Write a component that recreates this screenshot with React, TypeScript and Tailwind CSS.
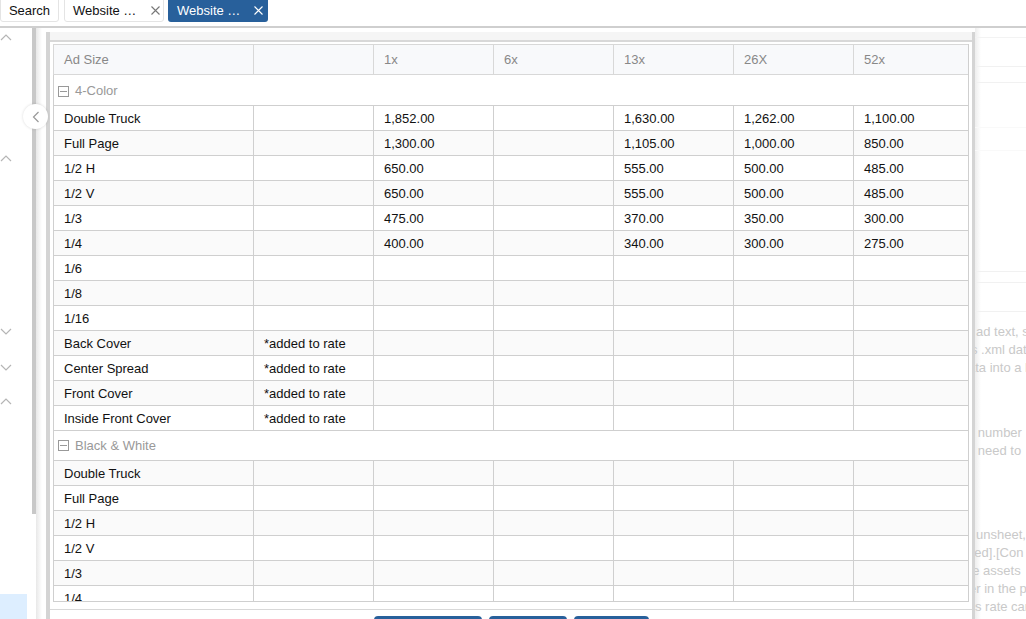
import React from "react";

const cols = [200, 120, 120, 120, 120, 120, 116];
const heads = ["Ad Size", "", "1x", "6x", "13x", "26X", "52x"];
type R = string[];
const color: R[] = [
  ["Double Truck", "", "1,852.00", "", "1,630.00", "1,262.00", "1,100.00"],
  ["Full Page", "", "1,300.00", "", "1,105.00", "1,000.00", "850.00"],
  ["1/2 H", "", "650.00", "", "555.00", "500.00", "485.00"],
  ["1/2 V", "", "650.00", "", "555.00", "500.00", "485.00"],
  ["1/3", "", "475.00", "", "370.00", "350.00", "300.00"],
  ["1/4", "", "400.00", "", "340.00", "300.00", "275.00"],
  ["1/6", "", "", "", "", "", ""],
  ["1/8", "", "", "", "", "", ""],
  ["1/16", "", "", "", "", "", ""],
  ["Back Cover", "*added to rate", "", "", "", "", ""],
  ["Center Spread", "*added to rate", "", "", "", "", ""],
  ["Front Cover", "*added to rate", "", "", "", "", ""],
  ["Inside Front Cover", "*added to rate", "", "", "", "", ""],
];
const bw: R[] = ["Double Truck", "Full Page", "1/2 H", "1/2 V", "1/3", "1/4"].map((n) => [n, "", "", "", "", "", ""]);

function Chevron({ up }: { up?: boolean }) {
  return (
    <svg width="12" height="7" viewBox="0 0 12 7" fill="none" stroke="#b5b5b5" strokeWidth="1.2">
      <path d={up ? "M1 6 L6 1 L11 6" : "M1 1 L6 6 L11 1"} />
    </svg>
  );
}

function X({ color }: { color: string }) {
  return (
    <svg width="9" height="9" viewBox="0 0 9 9" fill="none" stroke={color} strokeWidth="1.1">
      <path d="M0.5 0.5 L8.5 8.5 M8.5 0.5 L0.5 8.5" />
    </svg>
  );
}

function Rows({ rows, odd, shift }: { rows: R[]; odd: boolean; shift?: boolean }) {
  return (
    <>
      {rows.map((r, i) => (
        <tr key={i} className={`h-[25px] ${(i % 2 === 1) === odd ? "bg-[#fafafa]" : "bg-white"}`}>
          {r.map((c, j) => (
            <td key={j} className={`border border-[#cfcfcf] p-0 pl-[10px] text-[13px] text-[#111] whitespace-nowrap ${shift ? "pt-[2px] leading-[22px]" : "pt-[2px] leading-[22px]"}`}>
              {c}
            </td>
          ))}
        </tr>
      ))}
    </>
  );
}

function Group({ label, tall }: { label: string; tall?: boolean }) {
  return (
    <tr className={`${tall ? "h-[31px]" : "h-[30px]"} bg-white`}>
      <td colSpan={7} className={`border border-[#cfcfcf] p-0 ${tall ? "pt-[2px]" : ""}`}>
        <div className="flex items-center gap-[6px] pl-[4px] text-[13px] text-[#999]">
          <span className="w-[11px] h-[11px] border border-[#999] flex items-center justify-center">
            <span className="w-[7px] h-px bg-[#999]" />
          </span>
          {label}
        </div>
      </td>
    </tr>
  );
}

function Bg({ t, cls }: { t: string; cls: string }) {
  return <div className={`whitespace-nowrap text-[13px] leading-[18px] text-[#c9c9c9] ${cls}`}>{t}</div>;
}

export default function App() {
  return (
    <div className="w-[1026px] h-[619px] overflow-hidden bg-white font-['Liberation_Sans',Arial,sans-serif] flex flex-col">
      <div className="h-[28px] shrink-0 border-b-2 border-[#cfcfcf]">
        <div className="flex items-start h-[23px] -mt-[1px] text-[13px]">
          <div className="w-[59px] h-[23px] bg-white border border-[#e4e4e4] rounded-b-[3px] flex items-center justify-center text-[#111]">Search</div>
          <div className="w-[100px] h-[23px] ml-[5px] bg-white border border-[#e4e4e4] rounded-b-[3px] flex items-center pl-[8px] text-[#111]">
            <span>Website …</span>
            <span className="ml-auto mr-[3px] flex"><X color="#777" /></span>
          </div>
          <div className="w-[100px] h-[23px] ml-[4px] bg-[#28609b] rounded-b-[3px] flex items-center pl-[9px] text-white">
            <span>Website …</span>
            <span className="ml-auto mr-[5px] flex"><X color="#fff" /></span>
          </div>
        </div>
      </div>

      <div className="flex flex-1 min-h-0">
        <aside className="w-[32px] shrink-0 flex flex-col">
          <div className="pt-[6px] flex"><Chevron up /></div>
          <div className="mt-[114px] flex"><Chevron up /></div>
          <div className="mt-[166px] flex"><Chevron /></div>
          <div className="mt-[29px] flex"><Chevron /></div>
          <div className="mt-[27px] flex"><Chevron up /></div>
          <div className="mt-auto h-[25px] w-[27px] bg-[#ddeeff]" />
        </aside>
        <div className="w-[4px] h-[486px] shrink-0 bg-[#c8c8c8]" />
        <div className="w-[10px] shrink-0 bg-gradient-to-r from-[#e8e8e8] to-white to-[60%] relative">
          <div className="absolute left-[-13px] top-[76px] w-[25px] h-[25px] rounded-full bg-white shadow-[0_0_3px_rgba(0,0,0,0.15)] flex items-center justify-center z-10">
            <svg width="8" height="12" viewBox="0 0 8 12" fill="none" stroke="#999" strokeWidth="1.2"><path d="M6.5 1 L1.5 6 L6.5 11" /></svg>
          </div>
        </div>

        <main className="w-[929px] shrink-0 mt-[4px] border-l-[4px] border-r-[3px] border-[#d4d4d4] flex flex-col">
          <div className="h-[10px] shrink-0 bg-[#f5f5f5] border-b-2 border-[#d8d8d8]" />
          <div className="ml-[3px] mt-[2px] w-[916px] h-[558px] shrink-0 overflow-hidden border-b border-r border-[#cfcfcf]">
            <table className="table-fixed border-collapse w-[916px]">
              <colgroup>
                {cols.map((w, i) => (
                  <col key={i} style={{ width: w }} />
                ))}
              </colgroup>
              <tbody>
                <tr className="h-[30px] bg-[#f8f9fb]">
                  {heads.map((h, i) => (
                    <td key={i} className="border border-[#d8d8d8] p-0 pl-[10px] text-[13px] text-[#888]">{h}</td>
                  ))}
                </tr>
                <Group label="4-Color" tall />
                <Rows rows={color} odd />
                <Group label="Black &amp; White" />
                <Rows rows={bw} odd={false} />
              </tbody>
            </table>
          </div>
          <div className="mt-[7px] border-t border-[#d8d8d8] flex-1 flex pl-[324px] gap-[7px] pt-[6px]">
            <div className="w-[108px] h-[8px] bg-[#28609b] rounded-t-[4px]" />
            <div className="w-[78px] h-[8px] bg-[#28609b] rounded-t-[4px]" />
            <div className="w-[75px] h-[8px] bg-[#28609b] rounded-t-[4px]" />
          </div>
        </main>

        <aside className="flex-1 min-w-0 overflow-hidden bg-gradient-to-r from-[#eeeeee] to-white to-[6px] flex flex-col">
          <div className="mt-[9px] border-t border-[#f3f3f3]" />
          <div className="mt-[28px] border-t border-[#f1f1f1]" />
          <div className="mt-[15px] border-t border-[#f1f1f1]" />
          <div className="mt-[44px] border-t border-[#f9f9f9]" />
          <div className="mt-[22px] border-t border-[#f9f9f9]" />
          <div className="mt-[120px] border-t border-[#f1f1f1]" />
          <div className="mt-[10px] border-t border-[#f1f1f1]" />
          <div className="mt-[28px] border-t border-[#f1f1f1]" />
          <Bg t="ad text, see" cls="mt-[11px] ml-[1px]" />
          <Bg t="s .xml data" cls="-ml-[4px]" />
          <Bg t="ata into a list" cls="-ml-[7px]" />
          <Bg t="e number" cls="mt-[47px] -ml-[8px]" />
          <Bg t="e need to" cls="-ml-[8px]" />
          <Bg t="unsheet, a" cls="mt-[66px] ml-[1px]" />
          <Bg t="red].[Con" cls="-ml-[5px]" />
          <Bg t="he assets" cls="-ml-[10px]" />
          <Bg t="er in the p" cls="-ml-[6px]" />
          <Bg t="s rate car" cls="ml-0" />
        </aside>
      </div>
    </div>
  );
}
